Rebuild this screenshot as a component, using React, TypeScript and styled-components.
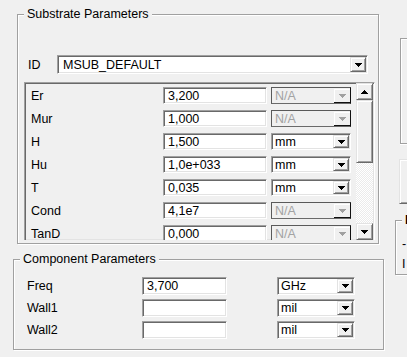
import styled, { createGlobalStyle, css } from 'styled-components'

const GlobalStyle = createGlobalStyle`
  html, body {
    margin: 0;
    padding: 0;
    background: #f0f0f0;
    overflow: hidden;
  }
  body {
    font-family: "Liberation Sans", Arial, sans-serif;
    font-size: 12.5px;
    color: #000;
  }
`

const sunken = css`
  box-sizing: border-box;
  border: 1px solid;
  border-color: #a0a0a0 #fff #fff #a0a0a0;
  box-shadow: inset 1px 1px #696969, inset -1px -1px #e3e3e3;
`

const raised = css`
  box-sizing: border-box;
  border: 1px solid;
  border-color: #e3e3e3 #696969 #696969 #e3e3e3;
  box-shadow: inset 1px 1px #fff, inset -1px -1px #a0a0a0;
  background: #f0f0f0;
`

const Window = styled.div`
  display: flex;
  width: 407px;
  height: 357px;
  overflow: hidden;
`

const LeftColumn = styled.div`
  flex: 0 0 390px;
  display: flex;
  flex-direction: column;
`

const RightColumn = styled.div`
  flex: 0 0 200px;
  display: flex;
  flex-direction: column;
  margin-left: 5px;
`

const Group = styled.fieldset<{ $left: number; $width: number; $top: number }>`
  box-sizing: border-box;
  margin: ${(p) => p.$top}px 0 0 ${(p) => p.$left}px;
  width: ${(p) => p.$width}px;
  min-width: 0;
  padding: 0;
  border: 1px solid #a0a0a0;
  box-shadow: inset 1px 1px #fff, 1px 1px #fff;
`

const Legend = styled.legend<{ $bold?: boolean }>`
  margin-left: 6px;
  padding: 0 3px;
  line-height: 16px;
  background: #f0f0f0;
  font-weight: ${(p) => (p.$bold ? 'bold' : 'normal')};
  white-space: nowrap;
`

const SubstrateBody = styled.div`
  padding: 0 3px 3px 6px;
`

const IdRow = styled.div`
  display: flex;
  align-items: center;
  margin-top: 33px;
  padding: 0 7px 0 4px;
`

const IdLabel = styled.span`
  flex: 0 0 29px;
`

const ListBox = styled.div`
  ${sunken};
  display: flex;
  margin-top: 8px;
  height: 158px;
  border-bottom: none;
  background: #f0f0f0;
  overflow: hidden;
`

const Rows = styled.div`
  flex: 1;
  display: flex;
  flex-direction: column;
  padding-top: 1px;
`

const ListRow = styled.div`
  display: flex;
  align-items: center;
  flex: 0 0 23px;
`

const RowLabel = styled.span<{ $width: number; $indent: number }>`
  flex: 0 0 ${(p) => p.$width}px;
  box-sizing: border-box;
  padding-left: ${(p) => p.$indent}px;
`

const TextField = styled.input<{ $width: number; $height: number }>`
  ${sunken};
  width: ${(p) => p.$width}px;
  height: ${(p) => p.$height}px;
  margin: 0;
  padding: 0 2px 0 4px;
  background: #fff;
  font: inherit;
  color: #000;
  outline: none;
`

const Combo = styled.div<{ $width?: number; $height: number; $disabled?: boolean; $gap?: number }>`
  box-sizing: border-box;
  display: flex;
  align-items: stretch;
  ${(p) => (p.$width ? `width: ${p.$width}px;` : 'flex: 1;')}
  height: ${(p) => p.$height}px;
  margin-left: ${(p) => p.$gap ?? 0}px;
  ${(p) =>
    p.$disabled
      ? css`
          border: 1px solid;
          border-color: #5a5a5a #101010 #6a6a6a #5a5a5a;
          background: #f0f0f0;
          color: #a3a3a3;
          padding: 0;
        `
      : css`
          ${sunken};
          background: #fff;
          color: #000;
          padding: 1px;
        `}
`

const ComboValue = styled.span<{ $indent: number }>`
  flex: 1;
  display: flex;
  align-items: center;
  padding-left: ${(p) => p.$indent}px;
  white-space: nowrap;
  overflow: hidden;
`

const DropButton = styled.span<{ $disabled?: boolean }>`
  flex: 0 0 16px;
  display: flex;
  align-items: center;
  justify-content: center;
  ${(p) =>
    p.$disabled
      ? css`
          box-sizing: border-box;
          margin: 1px 0 0;
          background: #f0f0f0;
          box-shadow: inset 1px 1px #fff;
          border-bottom: 1px solid #101010;
        `
      : raised}
`

const ScrollBar = styled.div`
  flex: 0 0 17px;
  display: flex;
  flex-direction: column;
  margin-right: 1px;
`

const ScrollButton = styled.div`
  ${raised};
  flex: 0 0 17px;
  display: flex;
  align-items: center;
  justify-content: center;
`

const Thumb = styled.div`
  ${raised};
  flex: 0 0 63px;
`

const Track = styled.div`
  flex: 1;
  background: repeating-conic-gradient(#ffffff 0 25%, #ebebeb 0 50%) 0 0 / 2px 2px;
`

const ComponentBody = styled.div`
  display: flex;
  flex-direction: column;
  gap: 4px;
  padding: 10px 0 10px 13px;
`

const ParamRow = styled.div`
  display: flex;
  align-items: center;
`

const SidePanel = styled.div`
  box-sizing: border-box;
  margin: 38px 0 0 5px;
  height: 106px;
  border: 1px solid #a0a0a0;
  border-right: none;
  box-shadow: inset 1px 1px #fff, 0 1px #fff;
`

const SideButton = styled.div`
  ${raised};
  margin: 15px 0 0 4px;
  height: 45px;
`

const SideText = styled.div`
  padding: 6px 0 0 6px;
  line-height: 20px;
  white-space: nowrap;
`

const Arrow = ({ up, color = '#000' }: { up?: boolean; color?: string }) => (
  <svg width="7" height="4" viewBox="0 0 7 4" shapeRendering="crispEdges">
    <path
      d={
        up
          ? 'M3 0h1v1H3z M2 1h3v1H2z M1 2h5v1H1z M0 3h7v1H0z'
          : 'M0 0h7v1H0z M1 1h5v1H1z M2 2h3v1H2z M3 3h1v1H3z'
      }
      fill={color}
    />
  </svg>
)

type Param = { name: string; value: string; unit: string }

const substrate: Param[] = [
  { name: 'Er', value: '3,200', unit: 'N/A' },
  { name: 'Mur', value: '1,000', unit: 'N/A' },
  { name: 'H', value: '1,500', unit: 'mm' },
  { name: 'Hu', value: '1,0e+033', unit: 'mm' },
  { name: 'T', value: '0,035', unit: 'mm' },
  { name: 'Cond', value: '4,1e7', unit: 'N/A' },
  { name: 'TanD', value: '0,000', unit: 'N/A' },
]

const component: Param[] = [
  { name: 'Freq', value: '3,700', unit: 'GHz' },
  { name: 'Wall1', value: '', unit: 'mil' },
  { name: 'Wall2', value: '', unit: 'mil' },
]

const UnitCombo = ({
  unit,
  width,
  height,
  gap,
}: {
  unit: string
  width: number
  height: number
  gap: number
}) => {
  const disabled = unit === 'N/A'
  return (
    <Combo $width={width} $height={height} $disabled={disabled} $gap={gap}>
      <ComboValue $indent={disabled ? 3 : 2}>{unit}</ComboValue>
      <DropButton $disabled={disabled}>
        <Arrow color={disabled ? '#a0a0a0' : '#000'} />
      </DropButton>
    </Combo>
  )
}

export default function App() {
  return (
    <>
      <GlobalStyle />
      <Window>
        <LeftColumn>
          <Group $left={17} $width={362} $top={6}>
            <Legend>Substrate Parameters</Legend>
            <SubstrateBody>
              <IdRow>
                <IdLabel>ID</IdLabel>
                <Combo $height={19}>
                  <ComboValue $indent={4}>MSUB_DEFAULT</ComboValue>
                  <DropButton>
                    <Arrow />
                  </DropButton>
                </Combo>
              </IdRow>
              <ListBox>
                <Rows>
                  {substrate.map((p) => (
                    <ListRow key={p.name}>
                      <RowLabel $width={138} $indent={6}>
                        {p.name}
                      </RowLabel>
                      <TextField $width={104} $height={17} defaultValue={p.value} readOnly />
                      <UnitCombo unit={p.unit} width={80} height={17} gap={4} />
                    </ListRow>
                  ))}
                </Rows>
                <ScrollBar>
                  <ScrollButton>
                    <Arrow up />
                  </ScrollButton>
                  <Thumb />
                  <Track />
                  <ScrollButton>
                    <Arrow />
                  </ScrollButton>
                </ScrollBar>
              </ListBox>
            </SubstrateBody>
          </Group>

          <Group $left={13} $width={371} $top={7}>
            <Legend>Component Parameters</Legend>
            <ComponentBody>
              {component.map((p) => (
                <ParamRow key={p.name}>
                  <RowLabel $width={115} $indent={0}>
                    {p.name}
                  </RowLabel>
                  <TextField $width={85} $height={18} defaultValue={p.value} readOnly />
                  <UnitCombo unit={p.unit} width={78} height={18} gap={50} />
                </ParamRow>
              ))}
            </ComponentBody>
          </Group>
        </LeftColumn>

        <RightColumn>
          <SidePanel />
          <SideButton />
          <Group $left={0} $width={200} $top={8}>
            <Legend $bold>I</Legend>
            <SideText>
              -
              <br />
              I
            </SideText>
          </Group>
        </RightColumn>
      </Window>
    </>
  )
}
